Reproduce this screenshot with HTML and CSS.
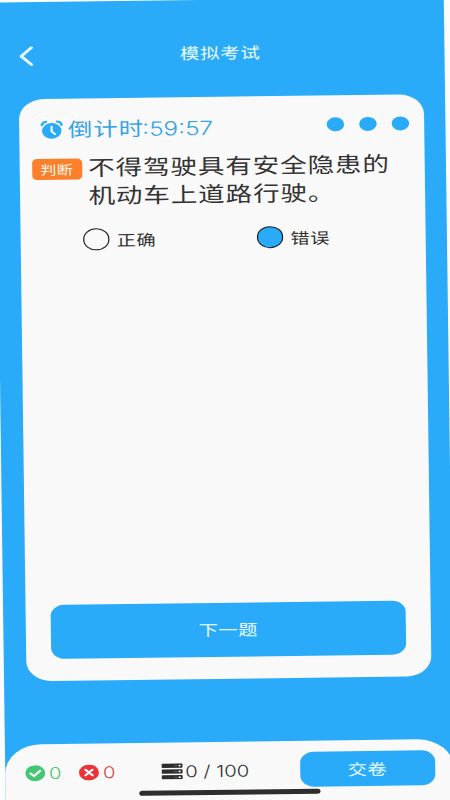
FILE: index.html
```html
<!DOCTYPE html>
<html lang="zh-CN">
<head>
<meta charset="utf-8">
<title>模拟考试</title>
<link rel="stylesheet" href="styles.css">
</head>
<body>
<div class="screen">
  <header class="topbar">
    <svg class="back" viewBox="0 0 11 20"><path d="M9.6 1.500 1.300 10l8.300 8.500"/></svg>
    <h1 class="title">模拟考试</h1>
  </header>
  <main class="card">
    <div class="status">
      <svg class="clock" viewBox="0 0 18 20">
        <circle cx="9" cy="11" r="7.8" fill="#29abf9"/>
        <path d="M1 5.2C1.4 3.3 2.8 2 4.6 1.7M17 5.2C16.6 3.3 15.2 2 13.4 1.7" fill="none" stroke="#29abf9" stroke-width="2" stroke-linecap="round"/>
        <path d="M8.9 6.7v4.8l2.7 2.7" fill="none" stroke="#fff" stroke-width="1.7" stroke-linecap="round" stroke-linejoin="round"/>
      </svg>
      <span class="countdown">倒计时<span class="digits">:59:57</span></span>
      <span class="dots"><i></i><i></i><i></i></span>
    </div>
    <section class="question">
      <span class="tag">判断</span>
      <p class="stem">不得驾驶具有安全隐患的机动车上道路行驶。</p>
    </section>
    <div class="options">
      <div class="option"><i class="radio"></i><span>正确</span></div>
      <div class="option"><i class="radio selected"></i><span>错误</span></div>
    </div>
    <button class="next">下一题</button>
  </main>
  <footer class="bottombar">
    <div class="score right">
      <svg viewBox="0 0 16 16"><circle cx="8" cy="8" r="8"/><path d="m4.2 8.2 2.8 2.6 4.9-5.2"/></svg>
      <span>0</span>
    </div>
    <div class="score wrong">
      <svg viewBox="0 0 16 16"><circle cx="8" cy="8" r="8"/><path d="m5.2 5.2 5.6 5.6m0-5.6-5.6 5.6"/></svg>
      <span>0</span>
    </div>
    <div class="progress">
      <svg viewBox="0 0 17 16">
        <path d="M1 0h15q1 0 1 1v2.4q0 1-1 1H1q-1 0-1-1V1q0-1 1-1ZM1 5.8h15q1 0 1 1v2.4q0 1-1 1H1q-1 0-1-1V6.8q0-1 1-1ZM1 11.6h15q1 0 1 1V15q0 1-1 1H1q-1 0-1-1v-2.4q0-1 1-1Z" fill="#2d2d2d"/>
        <g fill="#fff"><circle cx="14.5" cy="2.2" r=".9"/><circle cx="14.5" cy="8" r=".9"/><circle cx="14.5" cy="13.8" r=".9"/></g>
        <path d="M10.5 2.2h2M10.5 8h2M10.5 13.8h2" stroke="#888" stroke-width=".6"/>
      </svg>
      <span>0 / 100</span>
    </div>
    <button class="submit">交卷</button>
    <div class="home-indicator"></div>
  </footer>
</div>
</body>
</html>
```
FILE: styles.css
```css
* { box-sizing: border-box; }

body {
  margin: 0;
  width: 450px;
  height: 800px;
  overflow: hidden;
  background: #fbfcfc;
  font-family: "Noto Sans CJK SC", sans-serif;
  color: #333;
}

/* The narrow layout is widened and slightly tilted as a whole. */
.screen {
  display: flex;
  flex-direction: column;
  width: 359.2px;
  height: 820px;
  background: #29abf9;
  transform: matrix(1.25, -0.0159, 0.0133, 1, -5, 2.6);
  transform-origin: 0 0;
}

.topbar {
  display: grid;
  grid-template-columns: 26px 1fr 26px;
  align-items: center;
  height: 96.6px;
  padding: 9px 0 0;
}

.back {
  width: 11px;
  height: 20px;
  margin: 2px 0 0 18.7px;
  fill: none;
  stroke: #e9fbff;
  stroke-width: 2.6;
  stroke-linecap: round;
  stroke-linejoin: round;
}

.title {
  margin: -1px 0 0;
  color: #e9fbff;
  font-size: 15.5px;
  font-weight: 400;
  letter-spacing: .6px;
  text-align: center;
}

.card {
  display: flex;
  flex-direction: column;
  height: 582px;
  margin: 0 17.4px 0 17.6px;
  padding: 19px 11.4px 21.5px 10px;
  border-radius: 20px;
  background: #f9f9f9;
}

.status {
  display: flex;
  align-items: center;
  height: 24px;
  padding-left: 7.2px;
}

.clock { width: 18px; height: 20px; margin-top: 1px; }

.countdown {
  margin: -1px 0 0 4.2px;
  color: #35a3e5;
  font-size: 19.5px;
  letter-spacing: .8px;
  line-height: 24px;
}

.digits {
  margin-left: -1.5px;
  font-family: Inter, sans-serif;
  font-size: 19.5px;
  font-weight: 300;
  letter-spacing: 0;
}

.dots {
  display: flex;
  gap: 12px;
  margin: -4px 0 0 auto;
}

.dots i {
  width: 14px;
  height: 14px;
  border-radius: 50%;
  background: #29abf9;
}

.question {
  display: flex;
  align-items: flex-start;
  margin-top: 11px;
}

.tag {
  width: 40px;
  height: 21px;
  margin-top: 6px;
  border-radius: 4px;
  background: #fc7f2c;
  color: #fff3e6;
  font-size: 13px;
  letter-spacing: .3px;
  line-height: 21px;
  text-align: center;
}

.stem {
  width: 246px;
  margin: .5px 0 0 5.2px;
  font-size: 21.2px;
  letter-spacing: .75px;
  line-height: 28px;
}

.options {
  display: grid;
  grid-template-columns: 139px auto;
  margin: 20.2px 0 0 40.2px;
}

.option {
  display: flex;
  align-items: center;
  gap: 5.5px;
  height: 22px;
  font-size: 15.4px;
  letter-spacing: .4px;
}

.option span { margin-top: -1.5px; }

.radio {
  width: 21.6px;
  height: 21.6px;
  border: 1px solid #222;
  border-radius: 50%;
}

.radio.selected { background: #29abf9; }

button {
  padding: 0;
  border: 0;
  background: #29abf9;
  color: #e9fbff;
  font-family: inherit;
  font-size: 15.4px;
  letter-spacing: .4px;
}

.next {
  height: 54px;
  margin: auto 8.2px 0 10.2px;
  padding-bottom: 1.5px;
  border-radius: 11px;
}

.bottombar {
  position: relative;
  display: flex;
  align-items: flex-start;
  height: 78px;
  margin-top: 63.3px;
  padding: 11.6px 15.4px 0 15.8px;
  border-radius: 29px 29px 0 0;
  background: #f9f9f9;
}

.score,
.progress {
  display: flex;
  align-items: center;
  height: 36px;
  font-family: Inter, sans-serif;
  font-size: 16.3px;
  font-weight: 300;
}

.score { width: 43.2px; gap: 3.2px; }
.score svg { width: 16px; height: 16px; }
.score path {
  fill: none;
  stroke: #fff;
  stroke-width: 1.9;
  stroke-linecap: round;
  stroke-linejoin: round;
}
.right { color: #4bc476; fill: #42c873; }
.wrong { color: #d64646; fill: #ed3237; }

.progress {
  margin-left: 23.2px;
  gap: 1.5px;
  white-space: nowrap;
}
.progress svg { width: 17px; height: 16px; }

.submit {
  width: 108px;
  height: 34.5px;
  margin-left: auto;
  padding-bottom: 1px;
  border-radius: 11px;
}

.home-indicator {
  position: absolute;
  top: 48.6px;
  left: 107px;
  width: 145px;
  height: 4.5px;
  border-radius: 3px;
  background: #2d2d2d;
}
```
